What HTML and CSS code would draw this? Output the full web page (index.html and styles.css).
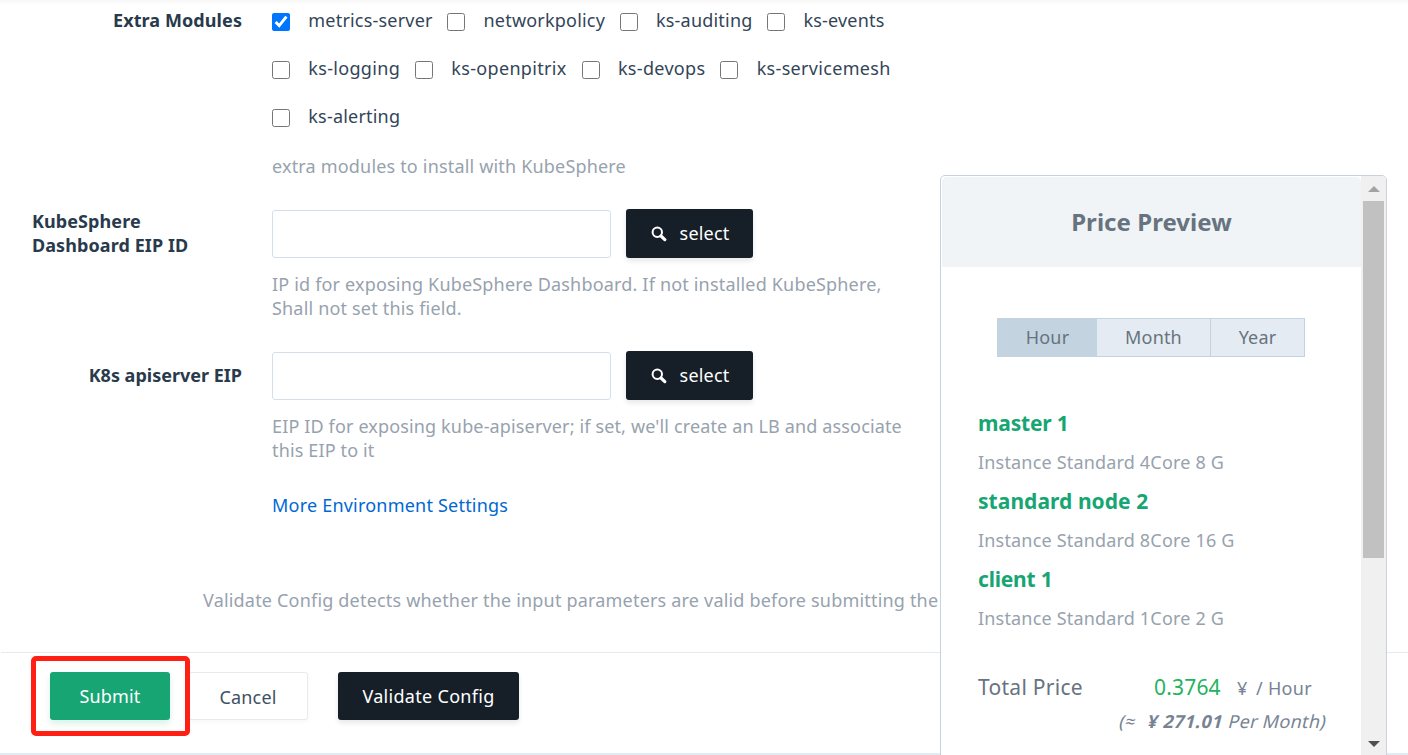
FILE: index.html
```html
<!DOCTYPE html>
<html lang="en">
<head>
<meta charset="utf-8">
<title>Create cluster</title>
<link rel="stylesheet" href="styles.css">
</head>
<body>
<main class="page">
  <form class="form">
    <div class="row row-modules">
      <div class="label label-right">Extra Modules</div>
      <div class="field">
        <div class="checks">
          <label class="check"><input type="checkbox" checked><span>metrics-server</span></label>
          <label class="check"><input type="checkbox"><span>networkpolicy</span></label>
          <label class="check"><input type="checkbox"><span>ks-auditing</span></label>
          <label class="check"><input type="checkbox"><span>ks-events</span></label>
        </div>
        <div class="checks checks-wide">
          <label class="check"><input type="checkbox"><span>ks-logging</span></label>
          <label class="check"><input type="checkbox"><span>ks-openpitrix</span></label>
          <label class="check"><input type="checkbox"><span>ks-devops</span></label>
          <label class="check"><input type="checkbox"><span>ks-servicemesh</span></label>
        </div>
        <div class="checks">
          <label class="check"><input type="checkbox"><span>ks-alerting</span></label>
        </div>
        <p class="hint">extra modules to install with KubeSphere</p>
      </div>
    </div>
    <div class="row row-eip">
      <div class="label">KubeSphere<br>Dashboard EIP ID</div>
      <div class="field">
        <div class="picker">
          <input class="text" type="text">
          <button class="btn dark select" type="button">
            <svg class="icon" viewBox="0 0 16 16"><circle cx="6.3" cy="6.2" r="4.7" fill="none" stroke="currentColor" stroke-width="2"/><path d="M10 10l3.8 3.6" stroke="currentColor" stroke-width="3.2" stroke-linecap="round"/></svg>
            <span>select</span>
          </button>
        </div>
        <p class="hint">IP id for exposing KubeSphere Dashboard. If not installed KubeSphere,<br>Shall not set this field.</p>
      </div>
    </div>
    <div class="row row-api">
      <div class="label label-right label-middle">K8s apiserver EIP</div>
      <div class="field">
        <div class="picker">
          <input class="text" type="text">
          <button class="btn dark select" type="button">
            <svg class="icon" viewBox="0 0 16 16"><circle cx="6.3" cy="6.2" r="4.7" fill="none" stroke="currentColor" stroke-width="2"/><path d="M10 10l3.8 3.6" stroke="currentColor" stroke-width="3.2" stroke-linecap="round"/></svg>
            <span>select</span>
          </button>
        </div>
        <p class="hint hint-tight">EIP ID for exposing kube-apiserver; if set, we'll create an LB and associate<br>this EIP to it</p>
        <a class="more">More Environment Settings</a>
      </div>
    </div>
    <p class="note">Validate Config detects whether the input parameters are valid before submitting the</p>
  </form>
  <footer class="actions">
    <button class="btn submit" type="button">Submit</button>
    <button class="btn cancel" type="button">Cancel</button>
    <button class="btn dark validate" type="button">Validate Config</button>
    <div class="highlight"></div>
  </footer>
</main>

<aside class="price">
  <div class="price-body">
    <h2 class="price-title">Price Preview</h2>
    <div class="tabs">
      <div class="tab active">Hour</div>
      <div class="tab month">Month</div>
      <div class="tab year">Year</div>
    </div>
    <dl class="items">
      <dt>master 1</dt><dd>Instance Standard 4Core 8 G</dd>
      <dt class="wide">standard node 2</dt><dd>Instance Standard 8Core 16 G</dd>
      <dt>client 1</dt><dd>Instance Standard 1Core 2 G</dd>
    </dl>
    <div class="total">
      <span class="total-label">Total Price</span>
      <span class="total-value">0.3764</span>
      <span class="yen">¥</span>
      <span class="unit">/ Hour</span>
    </div>
    <div class="approx"><span class="sign">(≈</span><b>¥ 271.01</b><span class="per">Per Month)</span></div>
  </div>
  <div class="scroll">
    <svg class="arrow" viewBox="0 0 12 6"><path d="M0 6L6 0l6 6z" fill="#a3a3a3"/></svg>
    <div class="thumb"></div>
    <svg class="arrow arrow-down" viewBox="0 0 12 6"><path d="M0 0h12L6 6z" fill="#505050"/></svg>
  </div>
</aside>
</body>
</html>
```
FILE: styles.css
```css
* { box-sizing: border-box; }

body {
  margin: 0;
  height: 755px;
  overflow: hidden;
  position: relative;
  background: #fff;
  color: #324558;
  font: 18px/24px "Noto Sans", "Open Sans", sans-serif;
  letter-spacing: 0.18px;
}

p, h2, dl, dd { margin: 0; }

.page {
  height: 755px;
  display: flex;
  flex-direction: column;
  border-bottom: 2px solid #e3eaf0;
  background: linear-gradient(#f7f7f7, #fff 5px);
}

.form { height: 652px; flex: none; }

.row { display: flex; gap: 30px; padding-left: 32px; }
.label { width: 210px; font-weight: 700; color: #283a4c; letter-spacing: 0.08px; }
.label-right { text-align: right; }
.field { white-space: nowrap; }

.row-modules { height: 209px; }
.row-modules .label { padding-top: 8px; }
.checks { display: flex; gap: 14.6px; height: 48px; }
.checks:first-child { height: 44px; }
.checks:first-child .check { margin-top: -4px; }
.check { display: flex; align-items: center; gap: 18.3px; height: 48px; }
.check input { width: 18px; height: 18px; margin: 4px 0 0; accent-color: #0075ff; }
.check span { letter-spacing: 0.2px; }
.checks-wide { gap: 15px; }
.checks-wide .check span { letter-spacing: 0.32px; }
.checks + .hint { margin-top: 14px; }

.hint { color: #97a2ae; }
.hint-tight { letter-spacing: 0.145px; }
.row-api { height: 0; }
.row-eip { height: 142px; }
.row-eip .hint, .row-api .hint { margin-top: 14px; }
.label-middle { padding-top: 12px; letter-spacing: 0; }

.picker { display: flex; align-items: flex-start; gap: 15px; height: 49px; }
.text { width: 339px; height: 48px; margin-top: 1px; border: 1px solid #d5dfe9; border-radius: 3px; background: #fff; }

.btn {
  border: 0;
  border-radius: 3px;
  padding: 0;
  height: 48px;
  font: inherit;
  letter-spacing: inherit;
  color: #fff;
  text-align: center;
}
.dark { background: #161f28; box-shadow: 0 3px 5px rgba(23, 31, 41, 0.1); }
.select { width: 127px; height: 49px; display: flex; align-items: center; justify-content: center; gap: 13px; padding: 0 0 1px 1px; }
.icon { width: 16px; height: 16px; margin-top: 1px; }

.more { display: block; margin-top: 31px; color: #0068d2; letter-spacing: 0.21px; }
.note { margin-top: 237px; padding-left: 203px; color: #97a2ae; white-space: nowrap; letter-spacing: 0.19px; }

.actions {
  position: relative;
  flex: 1;
  display: flex;
  border-top: 1px solid #e3eaf0;
  margin-left: 1px;
  padding: 19px 0 0 49px;
}
.submit { width: 120px; background: #17a673; box-shadow: 0 4px 6px rgba(23, 166, 115, 0.15); }
.cancel { width: 120px; margin-left: 18px; padding-top: 2px; border: 1px solid #e3eaf0; background: #fff; color: #3d5064; box-shadow: 0 2px 4px rgba(0, 0, 0, 0.03); }
.validate { width: 181px; margin-left: 30px; letter-spacing: 0.3px; }
.highlight { position: absolute; left: 30px; top: 3px; width: 159px; height: 80px; border: 5px solid #ff1f14; border-radius: 5px; }

/* Floating price panel */
.price {
  position: absolute;
  left: 940px;
  top: 175px;
  width: 447px;
  height: 590px;
  display: flex;
  border: 1px solid #c9d1dd;
  border-radius: 5px;
  overflow: hidden;
  background: #fff;
  color: #67737f;
}
.price-body { width: 420px; padding-left: 1px; }
.price-title {
  height: 90px;
  margin-top: 1px;
  border-radius: 5px 5px 0 0;
  background: #f0f4f7;
  font-size: 24px;
  font-weight: 700;
  line-height: 90px;
  letter-spacing: 0.05px;
  text-align: center;
}
.tabs { display: flex; width: 308px; height: 39px; margin: 51px 0 0 55px; border: 1px solid #c3d3e0; background: #e4ebf2; line-height: 36px; text-align: center; }
.tab.active { width: 99px; background: #c3d3e0; }
.tab.month { width: 114px; border-right: 1px solid #c3d3e0; }
.tab.year { flex: 1; }

.items { margin: 47px 0 0 36px; }
.items dt { height: 39px; line-height: 39px; font-size: 21px; font-weight: 700; letter-spacing: -0.2px; color: #17a673; }
.items dt.wide { letter-spacing: 0.05px; }
.items dd { height: 39px; line-height: 39px; color: #97a2ae; }

.total { display: flex; align-items: baseline; margin: 30px 0 0 36px; height: 39px; line-height: 39px; white-space: nowrap; }
.total-label { width: 176px; font-size: 21px; letter-spacing: 0.28px; }
.total-value { width: 83px; font-size: 21px; color: #22b35e; }
.yen { width: 19px; color: #778393; }
.unit { color: #778393; letter-spacing: 0.3px; }

.approx { display: flex; margin: -1px 0 0 178px; height: 30px; line-height: 30px; white-space: nowrap; color: #778393; transform: skewX(-14deg); }
.approx .sign { width: 28px; }
.approx b { width: 81px; font-weight: 700; letter-spacing: 0.5px; }
.approx .per { letter-spacing: 0.3px; }

.scroll { width: 25px; height: 579px; display: flex; flex-direction: column; align-items: center; background: #f0f0f0; }
.arrow { width: 12px; height: 6px; margin-top: 10px; flex: none; }
.thumb { width: 21px; height: 357px; margin-top: 9px; background: #c1c1c1; }
.arrow-down { margin-top: 183px; }
```
